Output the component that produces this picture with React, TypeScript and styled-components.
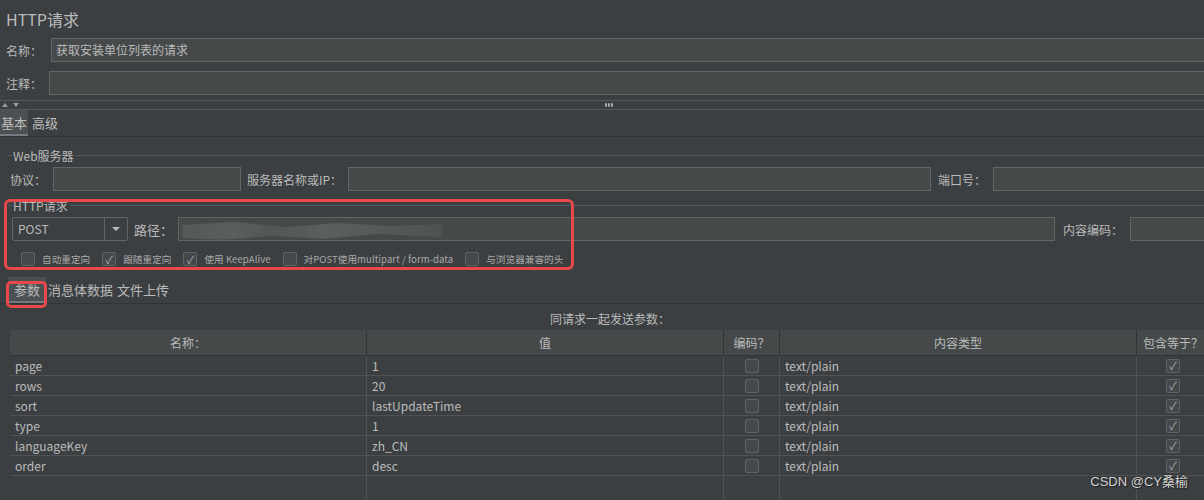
import React from 'react'
import styled, { createGlobalStyle } from 'styled-components'

const GlobalStyle = createGlobalStyle`
  html, body {
    margin: 0;
    background: #3c3f41;
  }
  body {
    font-family: "Noto Sans CJK SC", "Noto Sans", sans-serif;
    color: #bbbbbb;
  }
`

const Frame = styled.div`
  position: relative;
  width: 1204px;
  height: 500px;
  overflow: hidden;
  background: #3c3f41;
`

const Panel = styled.div`
  width: 1210px;
  display: flex;
  flex-direction: column;
`

const Title = styled.div`
  height: 38px;
  padding-left: 6px;
  font-size: 16px;
  line-height: 38px;
  color: #bbbbbb;
`

const FieldRow = styled.div<{ $mt?: number; $pl?: number }>`
  display: flex;
  align-items: center;
  height: 24px;
  margin-top: ${p => p.$mt ?? 0}px;
  padding-left: ${p => p.$pl ?? 0}px;
`

const Label = styled.span<{ $w: number; $ml?: number; $size?: number }>`
  flex: none;
  width: ${p => p.$w}px;
  margin-left: ${p => p.$ml ?? 0}px;
  font-size: ${p => p.$size ?? 12}px;
  color: #bbbbbb;
  white-space: nowrap;
`

const Field = styled.div<{ $w?: number }>`
  position: relative;
  box-sizing: border-box;
  height: 24px;
  ${p => (p.$w ? `flex: none; width: ${p.$w}px;` : 'flex: 1; min-width: 0;')}
  background: #45494a;
  border: 1px solid #646464;
  padding: 0 4px;
  font-size: 12px;
  line-height: 22px;
  color: #bbbbbb;
  white-space: nowrap;
  overflow: hidden;
`

const Redacted = styled.div`
  position: absolute;
  left: 3px;
  top: 2px;
  width: 260px;
  height: 20px;
  background: linear-gradient(90deg, #55595a 0%, #5b5e5e 20%, #525656 35%, #5c5f5f 55%, #575a5a 75%, #4e5253 100%);
  clip-path: polygon(0 25%, 20% 10%, 40% 35%, 60% 15%, 80% 30%, 100% 20%, 100% 85%, 75% 70%, 55% 95%, 35% 80%, 15% 100%, 0 90%);
  filter: blur(1px);
`

const Splitter = styled.div`
  display: flex;
  align-items: center;
  box-sizing: border-box;
  height: 10px;
  margin-top: 5px;
  border-top: 1px solid #56595b;
  border-bottom: 1px solid #56595b;
`

const Arrows = styled.div`
  display: flex;
  gap: 5px;
  padding-left: 2px;
  width: 20px;
`

const Arrow = styled.span<{ $down?: boolean }>`
  width: 0;
  height: 0;
  border-left: 3px solid transparent;
  border-right: 3px solid transparent;
  ${p => (p.$down ? 'border-top: 4px solid #9a9a9a;' : 'border-bottom: 4px solid #9a9a9a;')}
`

const Grip = styled.div`
  flex: 1;
  display: flex;
  justify-content: center;
  gap: 1px;
  padding-right: 14px;
`

const GripDot = styled.span`
  width: 2px;
  height: 4px;
  border-radius: 1px;
  background: #a8a8a8;
`

const TabStrip = styled.div<{ $mt?: number; $pl?: number }>`
  display: flex;
  align-items: stretch;
  height: 27px;
  box-sizing: border-box;
  margin-top: ${p => p.$mt ?? 0}px;
  padding-left: ${p => p.$pl ?? 0}px;
  border-bottom: 1px solid #323537;
`

const Tab = styled.div<{ $active?: boolean; $px?: number }>`
  position: relative;
  display: flex;
  align-items: center;
  padding: 0 ${p => p.$px ?? 3}px;
  font-size: 13px;
  color: #bbbbbb;
  background: ${p => (p.$active ? '#4b5052' : 'transparent')};
  border-bottom: 2px solid ${p => (p.$active ? '#747a80' : 'transparent')};
`

const Marked = styled.div`
  position: relative;
  display: flex;
  &::after {
    content: '';
    position: absolute;
    top: 4px;
    left: -2px;
    right: -1px;
    height: 27px;
    box-sizing: border-box;
    border: 3px solid #e8484a;
    border-radius: 5px;
    pointer-events: none;
  }
`

const Content = styled.div`
  display: flex;
  flex-direction: column;
  padding-left: 8px;
`

const Group = styled.div<{ $mt: number; $marked?: boolean }>`
  position: relative;
  margin-top: ${p => p.$mt}px;
  ${p =>
    p.$marked
      ? `&::after {
    content: '';
    position: absolute;
    top: 2px;
    left: -4px;
    width: 570px;
    height: 71px;
    box-sizing: border-box;
    border: 3px solid #e8484a;
    border-radius: 6px;
    pointer-events: none;
  }`
      : ''}
`

const GroupTitle = styled.div`
  display: flex;
  align-items: center;
  height: 16px;
  font-size: 12px;
  color: #bbbbbb;
  &::before {
    content: '';
    width: 4px;
    height: 1px;
    background: #56595b;
    margin-right: 1px;
  }
  &::after {
    content: '';
    flex: 1;
    height: 1px;
    background: #56595b;
    margin-left: 2px;
  }
`

const Combo = styled.div`
  display: flex;
  flex: none;
  box-sizing: border-box;
  width: 116px;
  height: 24px;
  border: 1px solid #646464;
  border-radius: 2px;
  font-size: 12px;
  color: #bbbbbb;
`

const ComboValue = styled.div`
  flex: 1;
  padding-left: 5px;
  line-height: 22px;
`

const ComboButton = styled.div`
  width: 22px;
  display: flex;
  align-items: center;
  justify-content: center;
  border-left: 1px solid #646464;
  &::after {
    content: '';
    border-left: 4px solid transparent;
    border-right: 4px solid transparent;
    border-top: 4px solid #bbbbbb;
  }
`

const CheckRow = styled.div`
  display: flex;
  align-items: center;
  gap: 12px;
  height: 14px;
  margin-top: 11px;
  padding-left: 13px;
`

const CheckItem = styled.label`
  display: flex;
  align-items: center;
  gap: 7px;
  font-size: 9.6px;
  letter-spacing: 0.05px;
  color: #a9a9a9;
  white-space: nowrap;
`

const Box = styled.span<{ $checked?: boolean }>`
  flex: none;
  box-sizing: border-box;
  width: 14px;
  height: 14px;
  border: 1px solid #5f6366;
  border-radius: 2px;
  background: #43494a;
  display: flex;
  align-items: center;
  justify-content: center;
  font-size: 11px;
  line-height: 1;
  color: #a8a8a8;
  letter-spacing: 0;
  &::after {
    content: '${p => (p.$checked ? '✓' : '')}';
  }
`

const Caption = styled.div`
  height: 26px;
  padding-top: 6px;
  padding-left: 10px;
  box-sizing: border-box;
  font-size: 12px;
  line-height: 18px;
  text-align: center;
  color: #bbbbbb;
`

const Table = styled.div`
  display: grid;
  grid-template-columns: 357px 357px 56px 357px 1fr;
  margin-left: 10px;
`

const HeadCell = styled.div`
  box-sizing: border-box;
  height: 26px;
  background: #45494a;
  border-right: 1px solid #323537;
  border-bottom: 1px solid #323537;
  font-size: 12px;
  line-height: 25px;
  text-align: center;
  color: #bbbbbb;
  white-space: nowrap;
  overflow: hidden;
`

const Cell = styled.div<{ $center?: boolean; $empty?: boolean }>`
  box-sizing: border-box;
  height: ${p => (p.$empty ? 40 : 20)}px;
  padding-left: 5px;
  border-right: 1px solid #505355;
  border-bottom: ${p => (p.$empty ? 'none' : '1px solid #505355')};
  font-size: 12px;
  line-height: 19px;
  color: #bbbbbb;
  white-space: nowrap;
  ${p => (p.$center ? 'display: flex; align-items: center; justify-content: center; padding-left: 0;' : '')}
`

const Watermark = styled.div`
  position: absolute;
  right: 16px;
  bottom: 10px;
  font-size: 13px;
  color: #d4d4d4;
  text-shadow: 0 0 2px #222, 1px 1px 1px #222;
  font-family: "Liberation Sans", "Noto Sans CJK SC", sans-serif;
`

const params = [
  { name: 'page', value: '1' },
  { name: 'rows', value: '20' },
  { name: 'sort', value: 'lastUpdateTime' },
  { name: 'type', value: '1' },
  { name: 'languageKey', value: 'zh_CN' },
  { name: 'order', value: 'desc' },
]

const options = [
  { text: '自动重定向', checked: false },
  { text: '跟随重定向', checked: true },
  { text: '使用 KeepAlive', checked: true },
  { text: '对POST使用multipart / form-data', checked: false },
  { text: '与浏览器兼容的头', checked: false },
]

const App = () => {
  return (
    <Frame>
      <GlobalStyle />
      <Panel>
        <Title>HTTP请求</Title>
        <FieldRow $pl={6}>
          <Label $w={45}>名称：</Label>
          <Field>获取安装单位列表的请求</Field>
        </FieldRow>
        <FieldRow $pl={6} $mt={9}>
          <Label $w={43}>注释：</Label>
          <Field />
        </FieldRow>
        <Splitter>
          <Arrows>
            <Arrow />
            <Arrow $down />
          </Arrows>
          <Grip>
            <GripDot />
            <GripDot />
            <GripDot />
          </Grip>
        </Splitter>
        <TabStrip>
          <Tab $active $px={1}>基本</Tab>
          <Tab $px={4}>高级</Tab>
        </TabStrip>

        <Content>
          <Group $mt={10}>
            <GroupTitle>Web服务器</GroupTitle>
            <FieldRow $mt={4} $pl={2}>
              <Label $w={43}>协议：</Label>
              <Field $w={188} />
              <Label $w={101} $ml={6}>服务器名称或IP：</Label>
              <Field />
              <Label $w={55} $ml={7}>端口号：</Label>
              <Field $w={217} />
            </FieldRow>
          </Group>

          <Group $mt={6} $marked>
            <GroupTitle>HTTP请求</GroupTitle>
            <FieldRow $mt={4} $pl={4}>
              <Combo>
                <ComboValue>POST</ComboValue>
                <ComboButton />
              </Combo>
              <Label $w={44} $ml={6} $size={13}>路径：</Label>
              <Field>
                <Redacted />
              </Field>
              <Label $w={67} $ml={8}>内容编码：</Label>
              <Field $w={80} />
            </FieldRow>
            <CheckRow>
              {options.map(o => (
                <CheckItem key={o.text}>
                  <Box $checked={o.checked} />
                  {o.text}
                </CheckItem>
              ))}
            </CheckRow>
          </Group>
        </Content>

        <TabStrip $mt={11} $pl={8}>
          <Marked>
            <Tab $active $px={6}>参数</Tab>
          </Marked>
          <Tab $px={2}>消息体数据</Tab>
          <Tab $px={2}>文件上传</Tab>
        </TabStrip>
        <Caption>同请求一起发送参数：</Caption>
        <Table>
          <HeadCell>名称：</HeadCell>
          <HeadCell>值</HeadCell>
          <HeadCell>编码？</HeadCell>
          <HeadCell>内容类型</HeadCell>
          <HeadCell>包含等于？</HeadCell>
          {params.map(p => (
            <React.Fragment key={p.name}>
              <Cell>{p.name}</Cell>
              <Cell>{p.value}</Cell>
              <Cell $center>
                <Box />
              </Cell>
              <Cell>text/plain</Cell>
              <Cell $center>
                <Box $checked />
              </Cell>
            </React.Fragment>
          ))}
          <Cell $empty />
          <Cell $empty />
          <Cell $empty />
          <Cell $empty />
          <Cell $empty />
        </Table>
      </Panel>
      <Watermark>CSDN @CY桑榆</Watermark>
    </Frame>
  )
}

export default App
